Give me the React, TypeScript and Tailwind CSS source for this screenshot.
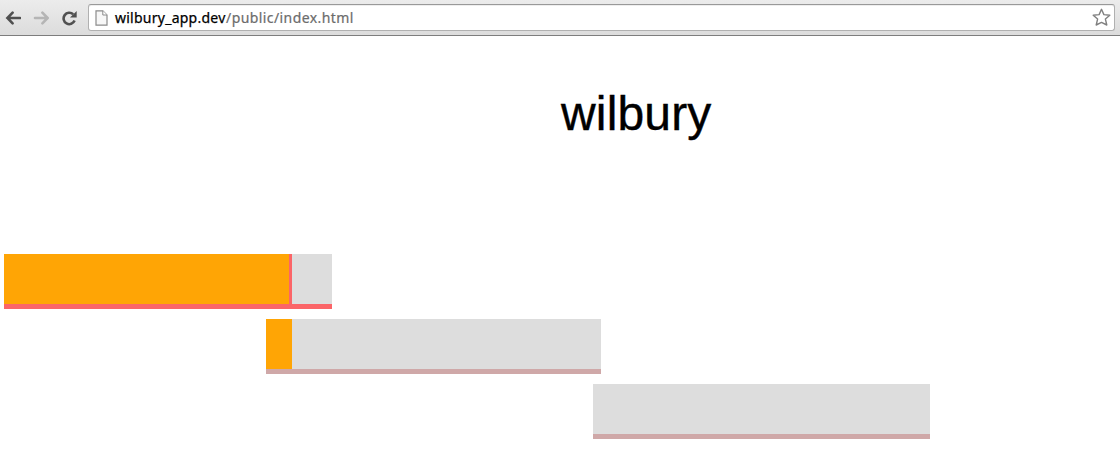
function Toolbar() {
  return (
    <header className="flex h-9 items-start border-b border-[#7d7d7d] bg-linear-to-b from-[#ececec] to-[#dcdcdc] pl-[5px] pr-[5px] pt-1">
      <div className="flex h-[27px] w-[83px] items-center">
        <svg className="mr-3 h-4 w-4" viewBox="0 0 16 16" fill="none" stroke="#505050" strokeWidth="2.6">
          <path d="M7.6 2.7 2.4 8l5.2 5.3M2.5 8H15" strokeLinecap="round" />
        </svg>
        <svg className="mr-3 h-4 w-4" viewBox="0 0 16 16" fill="none" stroke="#b5b5b5" strokeWidth="2.6">
          <path d="M9.4 2.7 14.6 8l-5.2 5.3M14.5 8H2" strokeLinecap="round" />
        </svg>
        <svg className="h-4 w-4" viewBox="0 0 16 16">
          <path d="M12.2 4.3A5.7 5.7 0 1 0 13.6 10.6" fill="none" stroke="#505050" strokeWidth="2.6" />
          <path d="M15.7 1v6.6H9z" fill="#505050" />
        </svg>
      </div>
      <div className="flex h-[27px] min-w-0 flex-1 items-center rounded-[3px] border border-[#b0b0b0] border-t-[#999999] bg-white pl-1.5 pr-[3px] shadow-[inset_0_1px_0_#eeeeee]">
        <svg className="mr-[7px] h-4 w-[13px]" viewBox="0 0 13 16" fill="#f7f7f7" stroke="#8b8b8b">
          <path d="M1 .8h6.8l4.2 4.2v10.2H1z" strokeWidth="1.2" />
          <path d="M7.8.8v4.2H12" fill="#ffffff" />
        </svg>
        <div className="flex flex-1 whitespace-pre font-['Noto_Sans','Open_Sans',sans-serif] text-[14px] leading-5">
          <span className="w-[111px] tracking-[0.25px] text-black [-webkit-text-stroke:0.25px_#000000]">wilbury_app.dev</span>
          <span className="tracking-[0.42px] text-[#6c6c6c] [-webkit-text-stroke:0.2px_#6c6c6c]">/public/index.html</span>
        </div>
        <svg className="h-[19px] w-[19px]" viewBox="0 0 19 19" fill="white" stroke="#808080" strokeWidth="1.4" strokeLinejoin="round">
          <path d="m9.5 1.3 2.4 5.3 5.9.6-4.4 3.9 1.4 5.9-5.3-2.6L4.2 17l1.4-5.9L1.2 7.2l5.9-.6z" />
        </svg>
      </div>
    </header>
  );
}

export default function App() {
  return (
    <div className="h-[474px] overflow-hidden bg-white">
      <Toolbar />
      <main>
        <h1 className="ml-[561px] pt-[50px] font-['Liberation_Sans',Arial,sans-serif] text-[48px] leading-[56px] tracking-[0.15px] text-black [-webkit-text-stroke:0.4px_#000000]">
          wilbury
        </h1>
        <div className="mt-28 flex flex-col items-start gap-2.5">
          <div className="ml-1 h-[55px] w-[328px] border-b-5 border-[#fb6568] bg-[#dddddd]">
            <div className="h-full w-[288px] border-r-3 border-[#fb6568] bg-[#ffa505]" />
          </div>
          <div className="ml-[266px] h-[55px] w-[335px] border-b-5 border-[#cfa8a8] bg-[#dddddd]">
            <div className="h-full w-[26px] bg-[#ffa505]" />
          </div>
          <div className="ml-[593px] h-[55px] w-[337px] border-b-5 border-[#cfa8a8] bg-[#dddddd]" />
        </div>
      </main>
    </div>
  );
}
